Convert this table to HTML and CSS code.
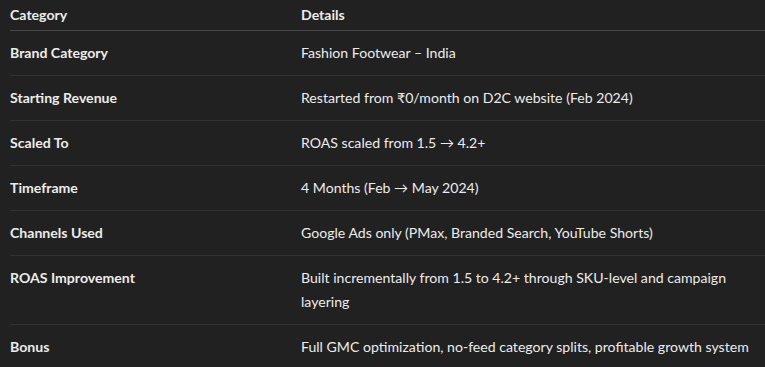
FILE: index.html
```html
<!DOCTYPE html>
<html lang="en">
<head>
<meta charset="utf-8">
<title>Case Study</title>
<link rel="stylesheet" href="styles.css">
</head>
<body>
<div class="wrap">
<table class="data">
  <thead>
    <tr><th class="c1">Category</th><th class="c2">Details</th></tr>
  </thead>
  <tbody>
    <tr><td class="c1">Brand Category</td><td class="c2">Fashion Footwear – India</td></tr>
    <tr><td class="c1">Starting Revenue</td><td class="c2">Restarted from ₹0/month on D2C website (Feb 2024)</td></tr>
    <tr><td class="c1">Scaled To</td><td class="c2">ROAS scaled from 1.5 → 4.2+</td></tr>
    <tr><td class="c1">Timeframe</td><td class="c2">4 Months (Feb → May 2024)</td></tr>
    <tr><td class="c1">Channels Used</td><td class="c2">Google Ads only (PMax, Branded Search, YouTube Shorts)</td></tr>
    <tr><td class="c1">ROAS Improvement</td><td class="c2">Built incrementally from 1.5 to 4.2+ through SKU-level and campaign layering</td></tr>
    <tr><td class="c1">Bonus</td><td class="c2">Full GMC optimization, no-feed category splits, profitable growth system</td></tr>
  </tbody>
</table>
</div>
</body>
</html>
```
FILE: styles.css
```css
html, body {
  margin: 0;
  padding: 0;
  background: #212121;
  overflow: hidden;
}
body {
  font-family: Lato, "Noto Sans", sans-serif;
  font-size: 14.1px;
  line-height: 24px;
  color: #ececec;
}
.wrap {
  padding-left: 10px;
}
.data {
  border-collapse: collapse;
  width: 776px;
  table-layout: fixed;
}
.data th, .data td {
  text-align: left;
  vertical-align: top;
  padding: 10px 0;
}
.data .c1 { width: 291px; font-weight: 700; }
.data .c2 { padding-right: 30px; }
.data th {
  padding: 3px 0;
  font-weight: 700;
  border-bottom: 1px solid #474747;
}
.data th.c2 { padding-right: 30px; }
.data tbody tr + tr td {
  border-top: 1px solid #323232;
}
```
